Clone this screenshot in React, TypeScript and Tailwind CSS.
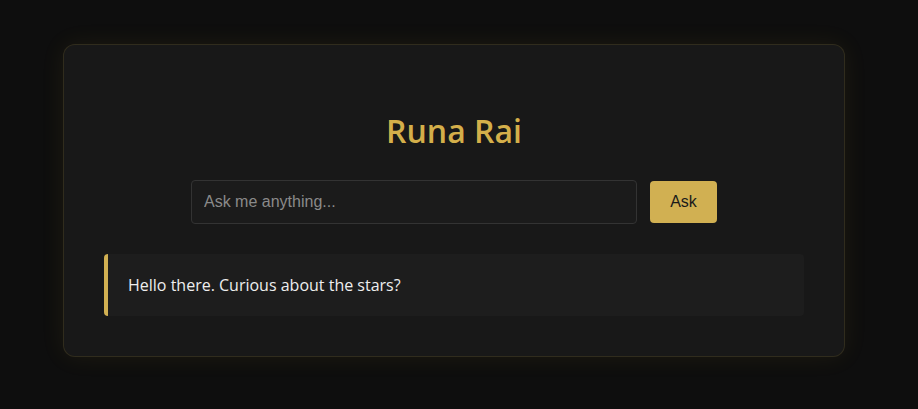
export default function App() {
  return (
    <div className="min-h-[409px] w-full bg-[#0e0e0e] pr-[10px] pt-[44px] font-['Open_Sans',sans-serif]">
      <div className="mx-auto w-[782px] rounded-xl border border-[#3a3520]/70 bg-[#181818] px-10 pb-10 pt-[66px] shadow-[0_0_24px_rgba(212,175,55,0.08)]">
        <h1 className="text-center text-[32px] font-semibold leading-10 text-[#d4af4a]">Runa Rai</h1>
        <div className="mt-[29px] flex items-center justify-center gap-[13px]">
          <input
            className="h-11 w-[446px] rounded border border-[#333] bg-[#1b1b1b] px-3 font-['Liberation_Sans',sans-serif] text-base text-[#ddd] placeholder:text-[#8a8a8a] outline-none"
            placeholder="Ask me anything..."
          />
          <button className="h-[42px] w-[67px] rounded bg-[#d1b052] font-['Liberation_Sans',sans-serif] text-base text-[#1a1a1a]">
            Ask
          </button>
        </div>
        <div className="mt-[30px] flex h-[62px] items-center rounded border-l-4 border-[#d1b052] bg-[#1d1d1d] pl-5 text-base text-[#eee]">
          Hello there. Curious about the stars?
        </div>
      </div>
    </div>
  )
}
